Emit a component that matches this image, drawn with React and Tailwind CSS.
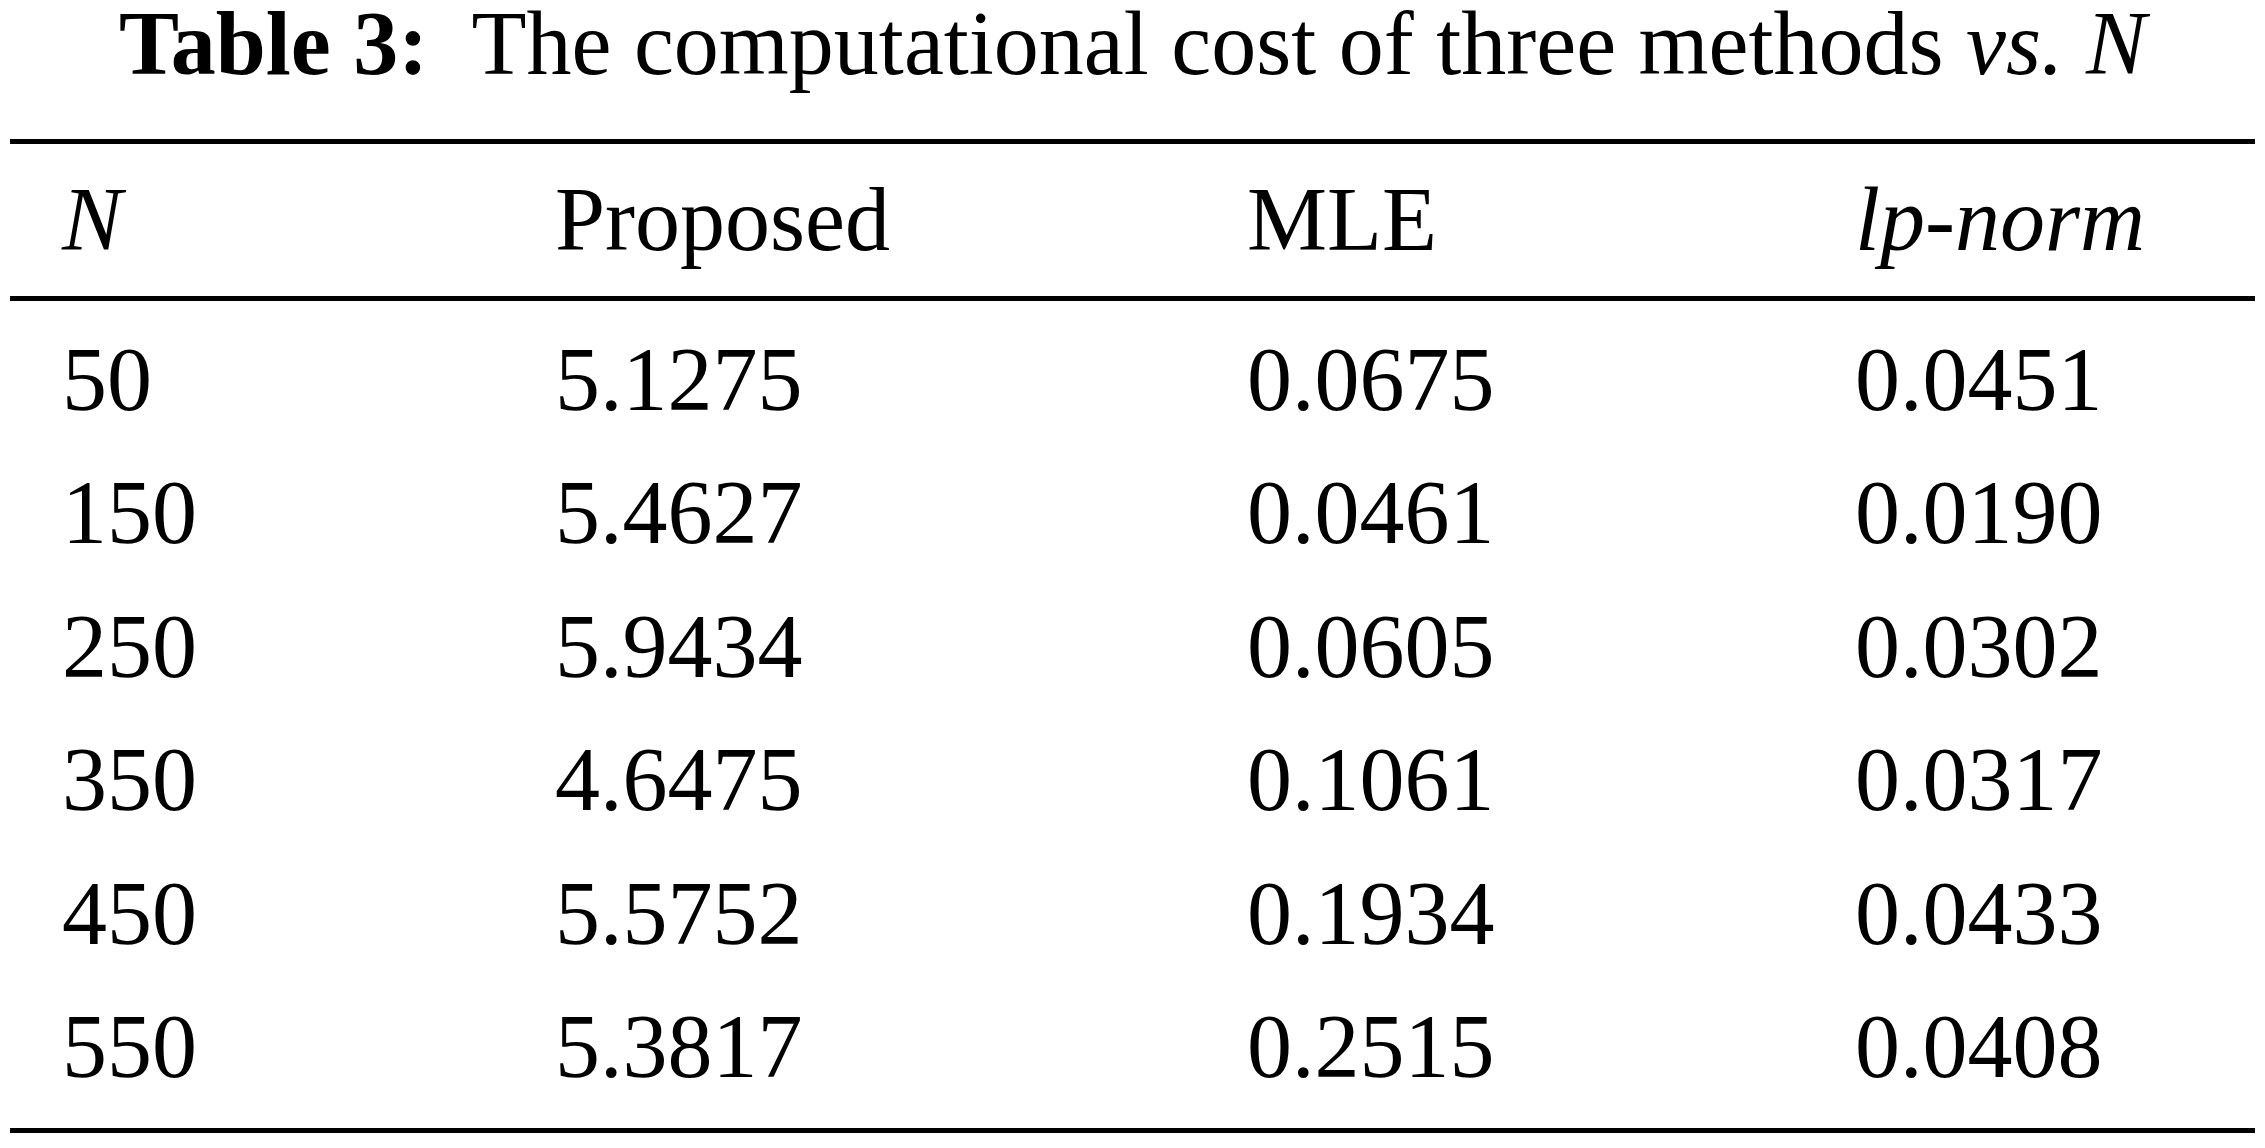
import React from "react";

const rows = [
  ["50", "5.1275", "0.0675", "0.0451"],
  ["150", "5.4627", "0.0461", "0.0190"],
  ["250", "5.9434", "0.0605", "0.0302"],
  ["350", "4.6475", "0.1061", "0.0317"],
  ["450", "5.5752", "0.1934", "0.0433"],
  ["550", "5.3817", "0.2515", "0.0408"],
];

export default function App() {
  return (
    <div className="bg-white w-[2265px] h-[1148px] overflow-hidden text-black text-[90px] font-['Liberation_Serif','Times_New_Roman',serif]">
      <div className="h-[88px] leading-[88px] text-center whitespace-pre">
        <span className="font-bold">Table 3:</span>
        {"  "}The computational cost of three methods <span className="italic">vs.</span> <span className="italic">N</span>
      </div>
      <div className="ml-[10px] w-[2245px] mt-[51px] border-t-[5px] border-b-[5px] border-black">
        <div className="grid grid-cols-[493px_692px_608px_1fr] pl-[52px] h-[157px] items-center leading-[100px] border-b-[5px] border-black">
          <div className="italic">N</div>
          <div>Proposed</div>
          <div>MLE</div>
          <div className="italic">lp-norm</div>
        </div>
        <div className="pt-[12px] pb-[14px]">
          {rows.map((r) => (
            <div
              key={r[0]}
              className="grid grid-cols-[493px_692px_608px_1fr] pl-[52px] h-[133.5px] items-center leading-[100px]"
            >
              {r.map((c, i) => (
                <div key={i}>{c}</div>
              ))}
            </div>
          ))}
        </div>
      </div>
    </div>
  );
}
